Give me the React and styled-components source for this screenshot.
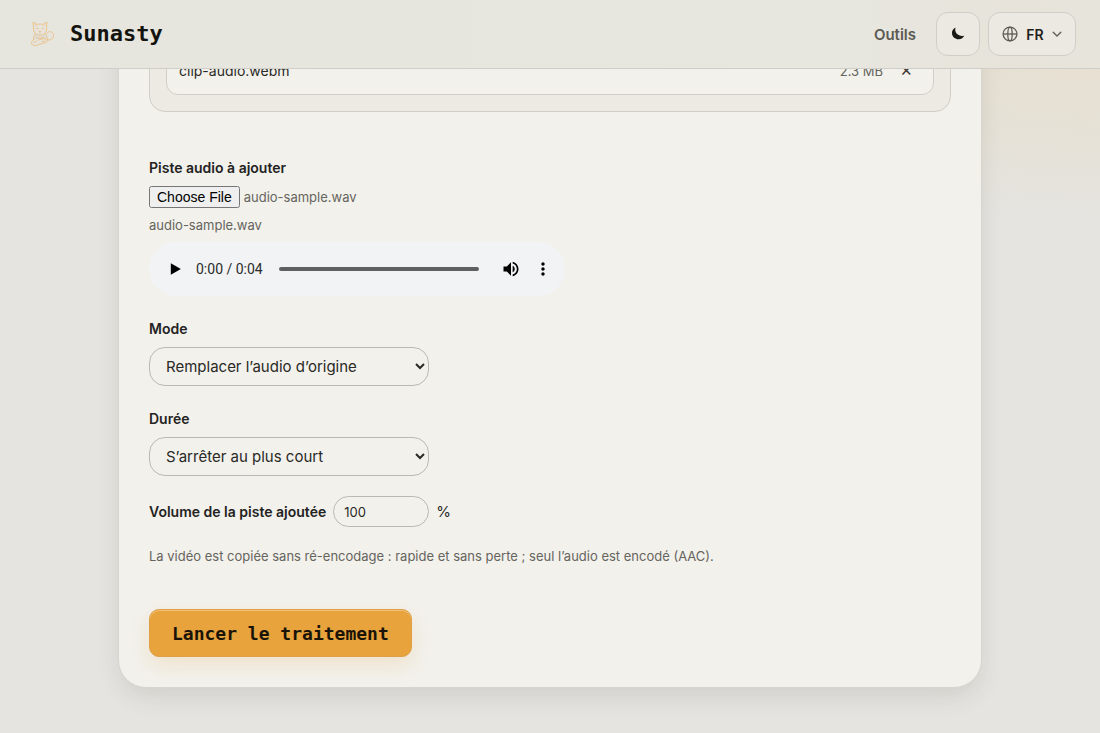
import React, { useEffect, useRef, useState } from 'react'
import styled, { createGlobalStyle } from 'styled-components'

const App = () => {
  const fileInput = useRef(null)
  const [mode, setMode] = useState('replace')
  const [duration, setDuration] = useState('shortest')
  const [volume, setVolume] = useState(100)

  // preload the sample track in the file field
  useEffect(() => {
    const transfer = new DataTransfer()
    transfer.items.add(new File([''], 'audio-sample.wav', { type: 'audio/wav' }))
    fileInput.current.files = transfer.files
  }, [])

  return (
    <>
      <GlobalStyle />
      <Header>
        <Brand href="#">
          <CatLogo />
          <BrandName>Sunasty</BrandName>
        </Brand>
        <Nav>
          <NavLink href="#outils">Outils</NavLink>
          <ThemeButton type="button" aria-label="Thème sombre">
            <MoonIcon />
          </ThemeButton>
          <LangButton type="button" aria-label="Langue">
            <GlobeIcon />
            FR
            <ChevronIcon />
          </LangButton>
        </Nav>
      </Header>
      <Main>
        <Card>
          <DropZone>
            <FileRow>
              <FileName>clip-audio.webm</FileName>
              <FileSize>2.3 MB</FileSize>
              <RemoveButton type="button" aria-label="Retirer">✕</RemoveButton>
            </FileRow>
          </DropZone>
          <Form onSubmit={(e) => e.preventDefault()}>
            <Fields>
              <Field>
                <Label htmlFor="track">Piste audio à ajouter</Label>
                <FileInput ref={fileInput} id="track" type="file" accept="audio/*" />
                <Hint>audio-sample.wav</Hint>
                <AudioPlayer />
              </Field>
              <Field>
                <Label htmlFor="mode">Mode</Label>
                <Select id="mode" value={mode} onChange={(e) => setMode(e.target.value)}>
                  <option value="replace">Remplacer l’audio d’origine</option>
                  <option value="mix">Mixer avec l’audio d’origine</option>
                </Select>
              </Field>
              <Field>
                <Label htmlFor="duration">Durée</Label>
                <Select id="duration" value={duration} onChange={(e) => setDuration(e.target.value)}>
                  <option value="shortest">S’arrêter au plus court</option>
                  <option value="video">Garder la durée de la vidéo</option>
                </Select>
              </Field>
            </Fields>
            <VolumeRow>
              <Label htmlFor="volume">Volume de la piste ajoutée</Label>
              <NumberInput
                id="volume"
                type="number"
                value={volume}
                onChange={(e) => setVolume(e.target.value)}
              />
              <Unit>%</Unit>
            </VolumeRow>
            <Hint>
              La vidéo est copiée sans ré-encodage : rapide et sans perte ; seul l’audio est encodé (AAC).
            </Hint>
            <SubmitButton type="submit">Lancer le traitement</SubmitButton>
          </Form>
        </Card>
      </Main>
    </>
  )
}

const AudioPlayer = () => {
  const [position, setPosition] = useState(0)

  return (
    <Player>
      <PlayerButton type="button" aria-label="Lecture">
        <svg width="20" height="20" viewBox="0 0 24 24" fill="#000">
          <path d="M7 5v14l12-7z" />
        </svg>
      </PlayerButton>
      <PlayerTime>0:00 / 0:04</PlayerTime>
      <Timeline
        type="range"
        aria-label="Position"
        min="0"
        max="4"
        value={position}
        onChange={(e) => setPosition(e.target.value)}
      />
      <PlayerButton type="button" aria-label="Volume">
        <svg width="20" height="20" viewBox="0 0 24 24" fill="#000">
          <path d="M3 9v6h4l5 5V4L7 9H3zm13.5 3c0-1.77-1.02-3.29-2.5-4.03v8.05c1.48-.73 2.5-2.25 2.5-4.02zM14 3.23v2.06c2.89.86 5 3.54 5 6.71s-2.11 5.85-5 6.71v2.06c4.01-.91 7-4.49 7-8.77s-2.99-7.86-7-8.77z" />
        </svg>
      </PlayerButton>
      <PlayerButton type="button" aria-label="Options">
        <svg width="20" height="20" viewBox="0 0 24 24" fill="#000">
          <path d="M12 8c1.1 0 2-.9 2-2s-.9-2-2-2-2 .9-2 2 .9 2 2 2zm0 2c-1.1 0-2 .9-2 2s.9 2 2 2 2-.9 2-2-.9-2-2-2zm0 6c-1.1 0-2 .9-2 2s.9 2 2 2 2-.9 2-2-.9-2-2-2z" />
        </svg>
      </PlayerButton>
    </Player>
  )
}

const CatLogo = () => (
  <svg width="36" height="36" viewBox="0 0 36 36" fill="none" stroke="#ebc48a" strokeLinecap="round" strokeLinejoin="round">
    <path fill="#dfddd6" d="M11 18c-1.500 2.500-2 5-1 7.500l13-1.500c1-2.500 0-5-2-7z" />
    <path fill="#e6e4dc" d="M9.500 12.500 9 6l4 2.500c2-.6 4-.6 6 0L23 6l-.5 6.500c.5 4-2.500 6.500-6.500 6.500s-7-2.500-6.500-6.500z" />
    <path d="M12.500 12.500H14M18 12.500h1.500M15 15l1 1 1-1M16 16v1M11 9l1 1M21 9l-1 1" />
    <path fill="#e6e4dc" d="M23 17c2-2.500 6-1.500 6.500 1.500.5 3.500-2 6-5.500 5.500" />
    <path fill="#e6e4dc" d="M10 23.500c-3 1-3.500 5-.5 6 3 .8 5.500-1.500 8.500-2 3-.6 5-1 6-3.500-2.500-2-6-1.500-9 0" />
    <path d="M10 26.500l3-1.500M12.500 21.500c2 1.500 5 1 7-.5M18 25.500l3-.5" />
  </svg>
)

const MoonIcon = () => (
  <svg width="14" height="14" viewBox="0 0 14 14" fill="#1a1a17">
    <path d="M4.500.5C1.800 1.800.6 4.300 1 6.800c.5 3.300 3.500 5.700 6.800 5.500 2.500-.2 4.600-1.700 5.500-3.900-2 1-4.500.8-6.500-.8C4.600 5.900 3.700 3.100 4.500.5z" />
  </svg>
)

const GlobeIcon = () => (
  <svg width="16" height="16" viewBox="0 0 16 16" fill="none" stroke="#5c5b53" strokeWidth="1.3">
    <circle cx="8" cy="8" r="6.9" />
    <ellipse cx="8" cy="8" rx="2.2" ry="6.9" />
    <path d="M1.100 8h13.800" />
  </svg>
)

const ChevronIcon = () => (
  <svg width="10" height="10" viewBox="0 0 10 10" fill="none" stroke="#5c5b53" strokeWidth="1.3" strokeLinecap="round" strokeLinejoin="round">
    <path d="M1.200 3.200 5 7l3.800-3.800" />
  </svg>
)

const GlobalStyle = createGlobalStyle`
  * {
    box-sizing: border-box;
  }

  body {
    margin: 0;
    color: #2a2925;
    font-family: Inter, "Liberation Sans", sans-serif;
    background:
      radial-gradient(ellipse 420px 220px at 100% 0, #e7dfcf 0%, #e6e1d6 60%, rgba(229, 228, 224, 0) 100%) no-repeat,
      #e5e4e0;
  }
`

const Header = styled.header`
  position: sticky;
  top: 0;
  z-index: 10;
  display: flex;
  align-items: center;
  justify-content: space-between;
  height: 69px;
  padding: 0 24px;
  border-bottom: 1px solid #cfcec8;
  background: linear-gradient(90deg, #e6e6df 0%, #e7e7e0 75%, #e7e3da 92%, #e7e4dc 100%);
`

const Brand = styled.a`
  display: flex;
  align-items: center;
  gap: 10px;
  color: #14140f;
  text-decoration: none;
`

const BrandName = styled.span`
  font-family: "DejaVu Sans Mono", monospace;
  font-size: 22px;
  font-weight: 700;
  line-height: 28px;
`

const Nav = styled.nav`
  display: flex;
  align-items: center;
  gap: 8px;
`

const NavLink = styled.a`
  margin-right: 12px;
  color: #5c5b53;
  font-size: 15px;
  font-weight: 600;
  text-decoration: none;
`

const HeaderButton = styled.button`
  display: flex;
  align-items: center;
  justify-content: center;
  height: 44px;
  border: 1px solid #d0cec7;
  border-radius: 12px;
  background: #ebe9e2;
  color: #1f1f1b;
  font: 600 14px Inter, sans-serif;
`

const ThemeButton = styled(HeaderButton)`
  width: 44px;
`

const LangButton = styled(HeaderButton)`
  gap: 8px;
  width: 88px;
`

const Main = styled.main`
  /* the card starts under the sticky header */
  margin-top: -69px;
  padding: 0 24px 44px;
`

const Card = styled.section`
  max-width: 864px;
  margin: 0 auto;
  padding: 28px 30px 30px;
  border: 1px solid #d6d5ce;
  border-radius: 28px;
  background: #f2f1ec;
  box-shadow: 0 10px 26px -4px rgba(60, 58, 40, 0.14);
`

const DropZone = styled.div`
  padding: 16px;
  border: 1px solid #cfcec9;
  border-radius: 16px;
  background: #eceae3;
`

const FileRow = styled.div`
  display: flex;
  align-items: center;
  height: 49px;
  padding: 0 12px;
  border: 1px solid #cfcec9;
  border-radius: 12px;
  background: #f2f1ec;
`

const FileName = styled.span`
  flex: 1;
  font-size: 14px;
`

const FileSize = styled.span`
  color: #66655d;
  font-size: 13px;
`

const RemoveButton = styled.button`
  width: 30px;
  margin-left: 8px;
  border: 0;
  background: none;
  color: #3a3933;
  font-size: 15px;
`

const Form = styled.form`
  display: flex;
  flex-direction: column;
  gap: 20px;
  margin-top: 45px;
`

const Fields = styled.div`
  display: flex;
  flex-direction: column;
  gap: 22px;
`

const Field = styled.div`
  display: flex;
  flex-direction: column;
  align-items: flex-start;
  gap: 8px;
`

const Label = styled.label`
  color: #24231f;
  font-size: 14px;
  font-weight: 600;
  line-height: 21px;
`

const FileInput = styled.input`
  height: 22px;
  color: #66655d;
  font-family: Inter, sans-serif;
  font-size: 13px;

  &::file-selector-button {
    font-family: "Liberation Sans", sans-serif;
    font-size: 14px;
  }
`

const Hint = styled.p`
  margin: 0;
  color: #66655d;
  font-size: 13px;
  line-height: 18px;
`

const Player = styled.div`
  display: flex;
  align-items: center;
  width: 100%;
  max-width: 416px;
  height: 54px;
  padding: 0 6px 0 10px;
  border-radius: 27px;
  background: #f1f3f4;
`

const PlayerButton = styled.button`
  display: flex;
  align-items: center;
  justify-content: center;
  width: 32px;
  height: 32px;
  padding: 0;
  border: 0;
  background: none;
`

const PlayerTime = styled.span`
  margin: 0 16px 0 5px;
  color: #2b2b2b;
  font-family: Roboto, sans-serif;
  font-size: 14px;
`

const Timeline = styled.input`
  flex: 1;
  min-width: 0;
  height: 4px;
  margin: 0 16px 0 0;
  border-radius: 2px;
  background: #5f5f5f;
  appearance: none;

  &::-webkit-slider-thumb {
    width: 0;
    appearance: none;
  }
`

const Select = styled.select`
  width: 280px;
  height: 39px;
  padding: 0 0 0 12px;
  border: 1px solid #bab9b3;
  border-radius: 16px;
  background: #f2f1ec;
  color: #2a2925;
  font-family: Inter, sans-serif;
  font-size: 15px;
`

const VolumeRow = styled.div`
  display: flex;
  align-items: center;
  gap: 7px;
`

const NumberInput = styled.input`
  width: 96px;
  height: 31px;
  padding: 0 10px;
  border: 1px solid #bab9b3;
  border-radius: 16px;
  background: #f2f1ec;
  color: #2a2925;
  font-family: Inter, sans-serif;
  font-size: 13px;
`

const Unit = styled.span`
  font-size: 15px;
`

const SubmitButton = styled.button`
  align-self: flex-start;
  height: 48px;
  margin-top: 24px;
  padding: 0 22px;
  border: 1px solid #dda046;
  border-radius: 10px;
  background: #e8a33d;
  box-shadow: 0 8px 20px rgba(232, 163, 61, 0.18), inset 0 1px 0 #f2c27c;
  color: #1a1408;
  font-family: "DejaVu Sans Mono", monospace;
  font-size: 18px;
  font-weight: 700;
`

export default App
